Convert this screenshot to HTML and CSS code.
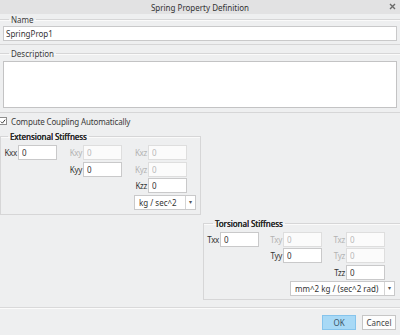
FILE: index.html
```html
<!DOCTYPE html>
<html lang="en">
  <head>
    <meta charset="UTF-8" />
    <title>Spring Property Definition</title>
    <link rel="stylesheet" href="styles.css">
  </head>
  <body>
    <div class="dialog">
      <div class="titlebar">
        <span class="title">Spring Property Definition</span>
        <svg class="close" width="7" height="7" viewBox="0 0 7 7">
          <path d="M1 1 L6 6 M6 1 L1 6" stroke="#6a6a6a" stroke-width="1.4" />
        </svg>
      </div>

      <fieldset class="band name-band">
        <legend>Name</legend>
        <input type="text" class="field wide" value="SpringProp1" />
      </fieldset>

      <fieldset class="band desc-band">
        <legend>Description</legend>
        <textarea class="field wide area"></textarea>
      </fieldset>

      <label class="check-row">
        <span class="checkbox">
          <svg width="7" height="7" viewBox="0 0 7 7">
            <path d="M1 3.6 L2.8 5.4 L6 1.4" fill="none" stroke="#333" stroke-width="1.1" />
          </svg>
        </span>
        Compute Coupling Automatically
      </label>

      <fieldset class="group ext">
        <legend>Extensional Stiffness</legend>
        <div class="matrix">
          <div class="cell"><span class="lbl">Kxx</span><input class="field" value="0" /></div>
          <div class="cell"><span class="lbl off">Kxy</span><input class="field" value="0" disabled /></div>
          <div class="cell"><span class="lbl off">Kxz</span><input class="field" value="0" disabled /></div>

          <div class="cell c2"><span class="lbl">Kyy</span><input class="field" value="0" /></div>
          <div class="cell"><span class="lbl off">Kyz</span><input class="field" value="0" disabled /></div>

          <div class="cell c3"><span class="lbl">Kzz</span><input class="field" value="0" /></div>

          <div class="dropdown ext-units">
            <span class="value">kg / sec^2</span>
            <span class="arrow">&#9662;</span>
          </div>
        </div>
      </fieldset>

      <fieldset class="group tor">
        <legend>Torsional Stiffness</legend>
        <div class="matrix">
          <div class="cell"><span class="lbl">Txx</span><input class="field" value="0" /></div>
          <div class="cell"><span class="lbl off">Txy</span><input class="field" value="0" disabled /></div>
          <div class="cell"><span class="lbl off">Txz</span><input class="field" value="0" disabled /></div>

          <div class="cell c2"><span class="lbl">Tyy</span><input class="field" value="0" /></div>
          <div class="cell"><span class="lbl off">Tyz</span><input class="field" value="0" disabled /></div>

          <div class="cell c3"><span class="lbl">Tzz</span><input class="field" value="0" /></div>

          <div class="dropdown tor-units">
            <span class="value">mm^2 kg / (sec^2 rad)</span>
            <span class="arrow">&#9662;</span>
          </div>
        </div>
      </fieldset>

      <div class="footer">
        <button class="btn primary">OK</button>
        <button class="btn">Cancel</button>
      </div>
    </div>
  </body>
</html>
```

FILE: styles.css
```css
body {
  margin: 0;
  background-color: #eeeff0;
  font-family: "Noto Sans", "Open Sans", sans-serif;
  font-size: 8px;
  line-height: 11px;
  color: #3a3a3a;
}
.dialog {
  width: 400px;
  height: 335px;
  overflow: hidden;
}
.titlebar {
  height: 14px;
  background-color: #e2e2e3;
  display: flex;
  align-items: center;
  justify-content: center;
  position: relative;
}
.title {
  color: #333;
}
.close {
  position: absolute;
  right: 4px;
  top: 3px;
}
fieldset {
  margin: 0;
  padding: 0;
  min-width: 0;
  border: 1px solid #d6d6d7;
  box-shadow: inset 0 1px 0 #fafafa;
}
legend {
  padding: 0 2px;
  margin-left: 6px;
  line-height: 11px;
  color: #3a3a3a;
}
.band {
  border-left: none;
  border-right: none;
  padding: 0 3px;
}
.name-band {
  padding-bottom: 3px;
}
.desc-band {
  margin-top: 3px;
  padding-bottom: 4px;
}
.field {
  box-sizing: border-box;
  height: 15px;
  width: 39px;
  margin: 0;
  padding: 0 3px;
  border: 1px solid #c9c9ca;
  background: #fff;
  font-family: inherit;
  font-size: 8px;
  color: #333;
  outline: none;
}
.field:disabled {
  background: #fbfbfb;
  border-color: #dedede;
  color: #b9b9b9;
}
.wide {
  width: 100%;
  display: block;
}
.name-band .wide {
  margin-top: 1px;
  padding-left: 2px;
}
.area {
  height: 47px;
  margin-top: 2px;
  resize: none;
  border-color: #c3c3c4;
}
.check-row {
  display: flex;
  align-items: center;
  gap: 4px;
  height: 14px;
  margin-top: 1px;
  margin-bottom: 3px;
  color: #3a3a3a;
  letter-spacing: -0.15px;
}
.checkbox {
  box-sizing: border-box;
  width: 8px;
  height: 8px;
  border: 1px solid #8d8d8d;
  background: #fff;
  display: flex;
  align-items: center;
  justify-content: center;
  margin-left: -1px;
}
.checkbox svg {
  display: block;
}
.group legend {
  font-weight: 500;
  color: #2b2b2b;
  letter-spacing: -0.1px;
  text-shadow: 0 0 0.3px #2b2b2b;
}
.ext {
  width: 201px;
  box-sizing: border-box;
  padding: 0 0 4px 1px;
}
.tor {
  margin: 3px 0 0 203px;
  width: 199px;
  box-sizing: border-box;
  padding: 0 0 3px 3px;
}
.matrix {
  display: grid;
  grid-template-columns: 55px 54px 54px;
  column-gap: 11px;
  row-gap: 1.5px;
  margin-top: 3px;
}
.tor .matrix {
  grid-template-columns: 52px 52px 52px;
  column-gap: 11px;
}
.cell {
  display: flex;
  align-items: center;
  justify-content: flex-end;
  gap: 1px;
}
.c2 {
  grid-column: 2;
}
.c3 {
  grid-column: 3;
}
.lbl {
  color: #333;
  letter-spacing: -0.3px;
}
.lbl.off {
  color: #b3b3b3;
}
.dropdown {
  grid-column: 3;
  box-sizing: border-box;
  height: 15px;
  display: flex;
  align-items: stretch;
  border: 1px solid #c9c9ca;
  background: #fff;
  color: #333;
}
.dropdown .value {
  flex: 1;
  padding-left: 4px;
  display: flex;
  align-items: center;
  white-space: nowrap;
}
.dropdown .arrow {
  width: 9px;
  border-left: 1px solid #d4d4d4;
  display: flex;
  align-items: center;
  justify-content: center;
  font-size: 6px;
  color: #555;
}
.ext-units {
  width: 62px;
  margin-left: 1px;
}
.tor-units {
  grid-column: 2 / 4;
  width: 105px;
  justify-self: end;
  margin-right: -10px;
}
.footer {
  margin-top: 7px;
  border-top: 1px solid #d9d9da;
  box-shadow: inset 0 1px 0 #fbfbfb;
  display: flex;
  justify-content: flex-end;
  gap: 6px;
  padding: 7px 4px 0 0;
}
.btn {
  box-sizing: border-box;
  width: 34px;
  height: 15px;
  padding: 0;
  font-family: inherit;
  font-size: 8px;
  color: #444;
  background: #fdfdfd;
  border: 1px solid #c6c6c6;
}
.btn.primary {
  background: #a8d9f6;
  border-color: #86c4ec;
  color: #3b5566;
}
```
